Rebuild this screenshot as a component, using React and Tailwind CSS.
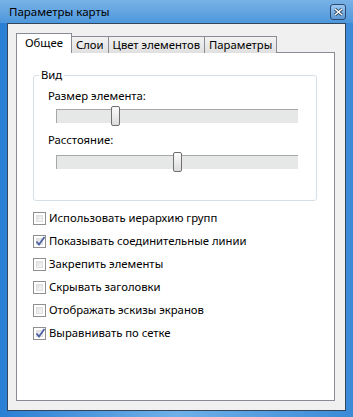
import React, { useState } from 'react';

function Checkbox({ checked, label, onToggle }) {
  return (
    <div className="flex items-center h-[23px] cursor-default" onClick={onToggle}>
      <div className="w-[13px] h-[13px] border border-[#8e8f8f] bg-white p-[2px] mr-[2px]">
        <div className="w-full h-full border border-[#dedede] bg-gradient-to-br from-[#e1e1e1] to-[#f8f8f8] relative">
          {checked && (
            <svg className="absolute -left-[2px] -top-[3px]" width="11" height="11" viewBox="0 0 11 11">
              <path d="M1.5 5.5 L4 8.5 L9.5 1" fill="none" stroke="#4c61a3" strokeWidth="1.8" />
            </svg>
          )}
        </div>
      </div>
      <span className="text-[11.3px] text-black ml-[1px]">{label}</span>
    </div>
  );
}

function Slider({ pos }) {
  return (
    <div className="relative h-[20px] ml-[22px] mr-[18px] flex items-center">
      <div className="w-full h-[14px] bg-[#e6e8e8] border-t border-l border-[#a7a7a7]" />
      <div
        className="absolute top-0 w-[9px] h-[20px] rounded-[2px] border border-[#6f6f6f] bg-gradient-to-b from-[#fbfbfb] to-[#dcdcdc]"
        style={{ left: pos }}
      />
    </div>
  );
}

export default function App() {
  const [tab, setTab] = useState(0);
  const [checks, setChecks] = useState([false, true, false, false, false, true]);
  const tabs = ['Общее', 'Слои', 'Цвет элементов', 'Параметры'];
  const labels = [
    'Использовать иерархию групп',
    'Показывать соединительные линии',
    'Закрепить элементы',
    'Скрывать заголовки',
    'Отображать эскизы экранов',
    'Выравнивать по сетке',
  ];

  const toggle = (i) => setChecks(checks.map((c, j) => (j === i ? !c : c)));

  return (
    <div
      className="w-[353px] h-[417px] flex flex-col bg-gradient-to-r from-[#2a7fd4] via-[#6fb0e8] to-[#3a8ad8] overflow-hidden"
      style={{ fontFamily: '"Noto Sans", "Open Sans", sans-serif' }}
    >
      {/* title bar */}
      <div className="h-[23px] flex items-center justify-between pl-[9px] pr-[7px] shrink-0 bg-gradient-to-b from-[#78b2e6] to-[#4d97dc]">
        <span className="text-[11.5px] text-black leading-none">Параметры карты</span>
        <button className="w-[16px] h-[16px] rounded-[3px] border border-[#2d4a6e] bg-gradient-to-b from-[#9ccaf2] to-[#5b98d4] flex items-center justify-center">
          <svg width="9" height="8" viewBox="0 0 9 8">
            <path d="M1 1 L8 7 M8 1 L1 7" stroke="#2d3f58" strokeWidth="3" />
            <path d="M1 1 L8 7 M8 1 L1 7" stroke="#ffffff" strokeWidth="1.5" />
          </svg>
        </button>
      </div>

      {/* client area */}
      <div className="flex-1 mx-[7px] mb-[6px] border border-[#34465c] bg-[#f0f0f0] pt-[9px] pl-[8px] pr-[10px] pb-[9px] flex flex-col">
        {/* tabs */}
        <div className="flex items-end h-[20px] relative z-10">
          {tabs.map((t, i) =>
            i === tab ? (
              <div
                key={t}
                onClick={() => setTab(i)}
                className="h-[20px] px-[8px] -mr-[1px] border border-b-0 border-[#898c95] bg-white text-[11.3px] flex items-center cursor-default"
              >
                {t}
              </div>
            ) : (
              <div
                key={t}
                onClick={() => setTab(i)}
                className="h-[17px] px-[4px] -mr-[1px] border border-b-0 border-[#898c95] bg-gradient-to-b from-[#f2f2f2] to-[#e0e0e0] text-[11.3px] flex items-center cursor-default"
              >
                {t}
              </div>
            )
          )}
        </div>

        {/* panel */}
        <div className="flex-1 -mt-[1px] border border-[#898c95] bg-white pt-[22px] pl-[16px] pr-[17px]">
          <fieldset className="relative h-[126px] border border-[#d5dfe5] rounded-[3px] pt-[10px]">
            <span className="absolute -top-[9px] left-[5px] bg-white px-[2px] text-[11.3px] leading-[16px]">Вид</span>
            <div className="text-[11.3px] ml-[14px] h-[19px] leading-[19px]">Размер элемента:</div>
            <div className="mt-[1px]">
              <Slider pos={55} />
            </div>
            <div className="text-[11.3px] ml-[14px] mt-[4px] h-[19px] leading-[19px]">Расстояние:</div>
            <div className="mt-[3px]">
              <Slider pos={117} />
            </div>
          </fieldset>

          <div className="mt-[6px]">
            {labels.map((l, i) => (
              <Checkbox key={l} label={l} checked={checks[i]} onToggle={() => toggle(i)} />
            ))}
          </div>
        </div>
      </div>
    </div>
  );
}
